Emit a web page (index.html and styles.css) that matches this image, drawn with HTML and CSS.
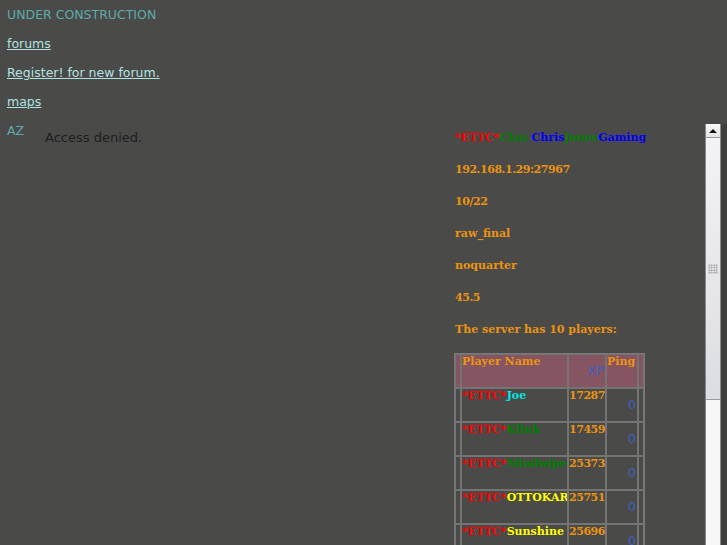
FILE: index.html
```html
<!DOCTYPE html>
<html>
<head>
<meta charset="utf-8">
<link rel="stylesheet" href="styles.css">
</head>
<body>
<div class="page">
  <div class="nav">
    <div class="line teal">UNDER CONSTRUCTION</div>
    <div class="line"><a href="#">forums</a></div>
    <div class="line"><a href="#">Register! for new forum.</a></div>
    <div class="line"><a href="#">maps</a></div>
  </div>
  <div class="row">
    <div class="az teal">AZ</div>
    <div class="frame-left"><div class="denied">Access denied.</div></div>
    <div class="frame-right">
      <div class="server">
        <div class="sl"><span class="red">*ETTC*</span><span class="green">Clan </span><span class="blue">Chris</span><span class="green">Jones</span><span class="blue">Gaming</span></div>
        <div class="sl digits">192.168.1.29:27967</div>
        <div class="sl digits">10/22</div>
        <div class="sl">raw_final</div>
        <div class="sl">noquarter</div>
        <div class="sl digits">45.5</div>
        <div class="sl last">The server has 10 players:</div>
        <table class="players">
          <colgroup>
            <col class="c-edge"><col class="c-name"><col class="c-xp"><col class="c-ping"><col class="c-edge">
          </colgroup>
          <tr class="head">
            <td></td>
            <td class="name">Player Name</td>
            <td class="xp">XP</td>
            <td class="ping-h">Ping</td>
            <td></td>
          </tr>
          <tr>
            <td></td>
            <td class="name"><span class="red">*ETTC*</span><span class="cyan">Joe</span></td>
            <td class="num">17287</td>
            <td class="ping">0</td>
            <td></td>
          </tr>
          <tr>
            <td></td>
            <td class="name"><span class="red">*ETTC*</span><span class="green">Klink</span></td>
            <td class="num">17459</td>
            <td class="ping">0</td>
            <td></td>
          </tr>
          <tr>
            <td></td>
            <td class="name"><span class="red">*ETTC*</span><span class="green">Mindwipe</span></td>
            <td class="num">25373</td>
            <td class="ping">0</td>
            <td></td>
          </tr>
          <tr>
            <td></td>
            <td class="name"><span class="red">*ETTC*</span><span class="yellow">OTTOKAR</span></td>
            <td class="num">25751</td>
            <td class="ping">0</td>
            <td></td>
          </tr>
          <tr>
            <td></td>
            <td class="name"><span class="red">*ETTC*</span><span class="yellow">Sunshine</span></td>
            <td class="num">25696</td>
            <td class="ping">0</td>
            <td></td>
          </tr>
        </table>
      </div>
      <div class="scrollbar">
        <div class="sb-btn"><span class="arrow"></span></div>
        <div class="sb-thumb"><div class="grip"></div></div>
        <div class="sb-track"></div>
      </div>
      <div class="strip"></div>
    </div>
  </div>
</div>
</body>
</html>
```

FILE: styles.css
```css
html, body {
  margin: 0;
  padding: 0;
  background: #4a4a48;
  overflow: hidden;
  height: 545px;
}
.page {
  font-family: "DejaVu Sans", sans-serif;
  font-size: 12.5px;
  padding-top: 7px;
}
.nav {
  padding-left: 7px;
}
.line {
  line-height: 16px;
  height: 16px;
  margin-bottom: 13px;
}
.teal { color: #5eabab; }
.line a { color: #b2e2e2; text-decoration: underline; }
.row {
  display: flex;
  align-items: flex-start;
  margin-top: 0;
}
.az {
  padding-left: 7px;
  width: 30px;
  line-height: 16px;
}
.frame-left {
  width: 394px;
  padding: 7px 8px 8px;
}
.denied {
  color: #1e1e1e;
  line-height: 15px;
  font-size: 13px;
}
.frame-right {
  display: flex;
  height: 430px;
  margin-top: 1px;
  flex: 1;
}
.server {
  flex: 1;
  overflow: hidden;
  padding: 6px 0 0 8px;
  font-family: "DejaVu Serif", serif;
  font-weight: bold;
  font-size: 11px;
  color: #ec9410;
}
.sl {
  line-height: 16px;
  height: 16px;
  margin-bottom: 16px;
  white-space: nowrap;
}
.sl.last { margin-bottom: 15px; }
.digits { letter-spacing: -0.45px; }
.red { color: #ff0000; }
.green { color: #008000; }
.blue { color: #0000ff; }
.cyan { color: #00e8e8; }
.yellow { color: #ffff00; }

.players {
  margin-left: -1px;
  border: 1px solid #7a7a7a;
  border-collapse: separate;
  border-spacing: 0;
  table-layout: fixed;
  width: 191px;
}
.c-edge { width: 6px; }
.c-name { width: 107px; }
.c-xp { width: 38px; }
.c-ping { width: 32px; }
.players td {
  border: 1px solid #747474;
  padding: 0;
  height: 34px;
  box-sizing: border-box;
  vertical-align: top;
  line-height: 14px;
  white-space: nowrap;
  overflow: hidden;
}
.players .head td {
  background: #855562;
}
.players td.num { letter-spacing: -0.45px; }
.players td.xp,
.players td.ping {
  text-align: right;
  vertical-align: middle;
  color: #3e5fbf;
  font-family: "DejaVu Sans", sans-serif;
  font-weight: normal;
  font-size: 13px;
  padding-right: 1px;
}
.players td.xp { padding-top: 0; }
.players td.ping { padding-top: 0; }

.scrollbar {
  width: 14px;
  border-left: 1px solid #8a8a8a;
  border-right: 1px solid #8a8a8a;
  display: flex;
  flex-direction: column;
  background: #f7f7f7;
}
.sb-btn {
  height: 13px;
  border-bottom: 1px solid #9a9a9a;
  background: linear-gradient(#fafafa, #e4e4e8);
  display: flex;
  align-items: center;
  justify-content: center;
}
.arrow {
  width: 0;
  height: 0;
  border-left: 4px solid transparent;
  border-right: 4px solid transparent;
  border-bottom: 4px solid #111;
}
.sb-thumb {
  height: 261px;
  border-bottom: 1px solid #9a9a9a;
  background: linear-gradient(#f3f3f6, #dcdde2);
  display: flex;
  align-items: center;
  justify-content: center;
}
.grip {
  width: 10px;
  height: 10px;
  background-image: radial-gradient(circle, #a8a8ac 0.8px, transparent 1px);
  background-size: 2.5px 2.5px;
}
.sb-track {
  flex: 1;
  background: #f7f7f7;
}
.strip {
  width: 6px;
  background: #3e3e3c;
}
```
